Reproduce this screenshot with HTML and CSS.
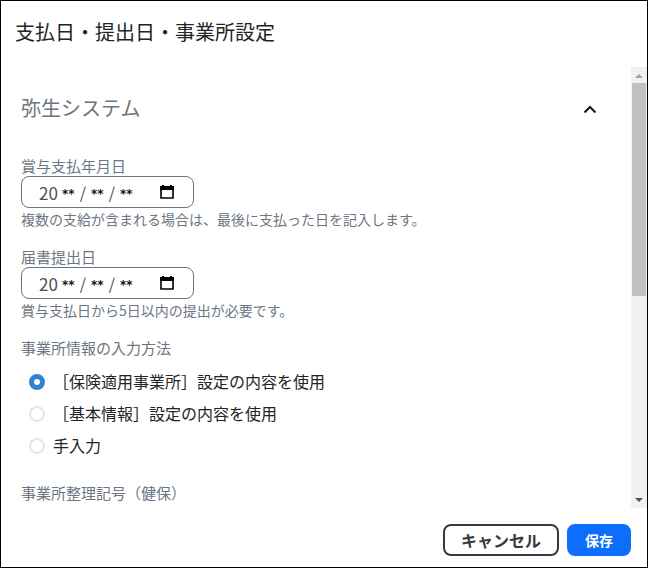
FILE: index.html
```html
<!DOCTYPE html>
<html lang="ja">
<head>
<meta charset="utf-8">
<title>支払日・提出日・事業所設定</title>
<link rel="stylesheet" href="styles.css">
</head>
<body>
<div class="dialog" role="dialog" aria-labelledby="dialog-title">
  <header class="dialog-header"><h1 id="dialog-title">支払日・提出日・事業所設定</h1></header>
  <div class="dialog-body">
    <main class="content">
      <div class="section-header">
        <h2>弥生システム</h2>
        <button class="collapse" type="button" aria-label="折りたたむ">
          <svg width="14" height="10" viewBox="0 0 14 10"><path d="M1.500 9.500L7 4 12.500 9.500" fill="none" stroke="#111" stroke-width="2"/></svg>
        </button>
      </div>
      <div class="field">
        <label class="label" for="bonus-date">賞与支払年月日</label>
        <div class="date">
          <input class="year" id="bonus-date" value="20"><input class="mask" value="**" aria-label="年"><span class="slash">/</span><input class="mask" value="**" aria-label="月"><span class="slash">/</span><input class="mask" value="**" aria-label="日">
          <button class="calendar" type="button" aria-label="カレンダー">
            <svg width="14" height="15" viewBox="0 0 14 15"><path d="M1 2h12v11H1z" fill="none" stroke="#000" stroke-width="1.6"/><path d="M0 1h14v4H0zM2 0h2v2H2zM10 0h2v2h-2z"/></svg>
          </button>
        </div>
        <p class="help">複数の支給が含まれる場合は、最後に支払った日を記入します。</p>
      </div>
      <div class="field">
        <label class="label" for="submit-date">届書提出日</label>
        <div class="date">
          <input class="year" id="submit-date" value="20"><input class="mask" value="**" aria-label="年"><span class="slash">/</span><input class="mask" value="**" aria-label="月"><span class="slash">/</span><input class="mask" value="**" aria-label="日">
          <button class="calendar" type="button" aria-label="カレンダー">
            <svg width="14" height="15" viewBox="0 0 14 15"><path d="M1 2h12v11H1z" fill="none" stroke="#000" stroke-width="1.6"/><path d="M0 1h14v4H0zM2 0h2v2H2zM10 0h2v2h-2z"/></svg>
          </button>
        </div>
        <p class="help">賞与支払日から5日以内の提出が必要です。</p>
      </div>
      <fieldset class="methods">
        <legend class="label">事業所情報の入力方法</legend>
        <label class="option"><input type="radio" name="method" checked>［保険適用事業所］設定の内容を使用</label>
        <label class="option"><input type="radio" name="method">［基本情報］設定の内容を使用</label>
        <label class="option"><input type="radio" name="method">手入力</label>
      </fieldset>
      <div class="label">事業所整理記号（健保）</div>
    </main>
    <div class="scrollbar" aria-hidden="true">
      <svg class="arrow" viewBox="0 0 16 16"><path d="M4 11l4-4 4 4z" fill="#a3a3a3"/></svg>
      <div class="track"><div class="thumb"></div></div>
      <svg class="arrow" viewBox="0 0 16 16"><path d="M4 6h8l-4 4z" fill="#505050"/></svg>
    </div>
  </div>
  <footer class="dialog-footer">
    <button class="button cancel" type="button">キャンセル</button>
    <button class="button save" type="button">保存</button>
  </footer>
</div>
</body>
</html>
```
FILE: styles.css
```css
* { box-sizing: border-box; }
body, h1, h2, p { margin: 0; }
body, input, button { font-family: "Noto Sans CJK JP", sans-serif; }
body { background: #fff; color: #212529; font-size: 16px; }
h1, h2 { font-size: 20px; font-weight: 400; line-height: 32px; }
h2 { color: #6c757d; }
.dialog { display: flex; flex-direction: column; height: 100vh; border: 1px solid #000; }
.dialog-header { padding: 15px 14px 19px; }
.dialog-body { display: flex; flex: 1; min-height: 0; }
.content { flex: 1; min-width: 0; overflow: hidden; padding: 25px 20px 0; }
.section-header { display: flex; align-items: center; justify-content: space-between; padding-right: 14px; margin-bottom: 32px; }
.collapse, .calendar { display: flex; padding: 0; border: 0; background: none; }
.label { display: block; padding: 0; color: #6c7683; font-size: 15px; line-height: 20px; }
.field { margin-bottom: 16px; }
.date { display: flex; align-items: center; width: 173px; height: 32px; padding: 0 19px 0 17px; border: 1px solid #6c757d; border-radius: 8px; color: #495057; }
.date input { padding: 0; border: 0; background: none; color: inherit; outline: 0; }
.date .year { width: 23px; height: 24px; font-size: 17px; }
.date .mask { width: 13px; height: 18px; padding-top: 4px; color: #111; font: 700 12px/14px "DejaVu Sans", sans-serif; }
.slash { width: 16px; text-align: center; }
.calendar { margin-left: auto; }
.help { color: #6c7683; font-size: 14px; line-height: 23px; }
.methods { margin: 0 0 21px; padding: 0; border: 0; }
.methods .label { margin-bottom: 8px; }
.option { display: flex; align-items: center; gap: 8px; height: 32px; padding: 0 0 2px 8px; }
.option input { appearance: none; width: 16px; height: 16px; margin: 2px 0 0; border: 2px solid #e2e6ea; border-radius: 50%; background: #fff; }
.option input:checked { border: 5px solid #3182ce; }
.scrollbar { display: flex; flex-direction: column; width: 16px; background: #f1f1f1; }
.arrow { flex: none; width: 16px; height: 16px; }
.track { flex: 1; padding: 0 1px; }
.thumb { height: 52%; background: #c1c1c1; }
.dialog-footer { display: flex; justify-content: flex-end; gap: 8px; padding: 16px 16px 11px; }
.button { height: 32px; padding: 0 16px; border: 2px solid #343a40; border-radius: 8px; background: #fff; color: #343a40; font-size: 16px; font-weight: 700; line-height: 24px; }
.save { border-color: #0d6efd; background: #0d6efd; color: #fff; font-size: 14px; }
```
